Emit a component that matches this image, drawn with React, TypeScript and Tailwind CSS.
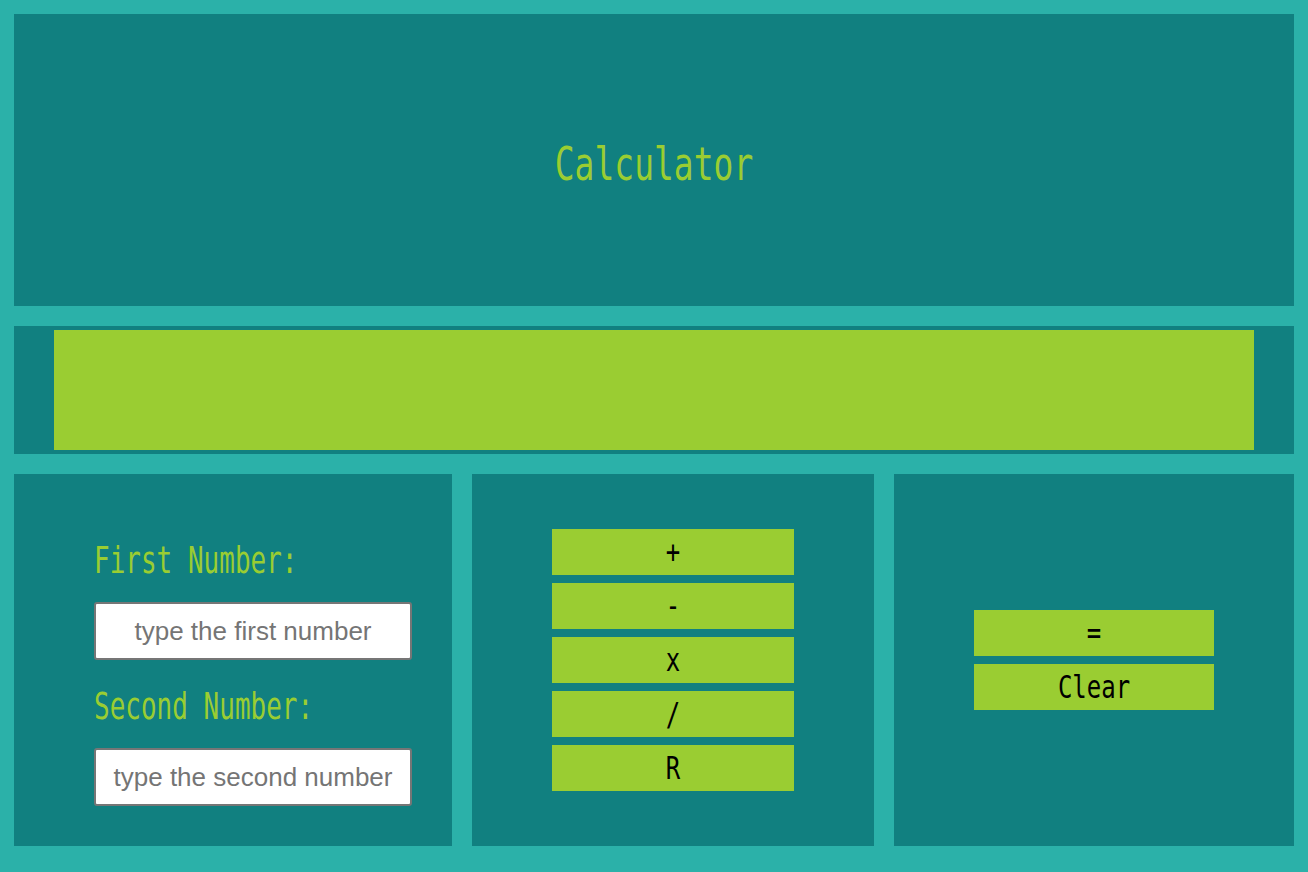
import { useState } from "react";

const mono = "font-['DejaVu_Sans_Mono',monospace]";

const OpButton = ({ label, wide, onClick }: { label: string; wide: string; onClick?: () => void }) => (
  <button
    onClick={onClick}
    className={`${wide} h-[46px] bg-[#9acd32] text-black flex items-center justify-center ${mono}`}
  >
    <span className="text-[24px] leading-[28px] inline-block scale-y-[1.35]">{label}</span>
  </button>
);

const App = () => {
  const [first, setFirst] = useState("");
  const [second, setSecond] = useState("");
  const [result, setResult] = useState("");

  const calc = (op: string) => {
    const a = parseFloat(first);
    const b = parseFloat(second);
    if (isNaN(a) || isNaN(b)) return;
    let r = 0;
    if (op === "+") r = a + b;
    if (op === "-") r = a - b;
    if (op === "x") r = a * b;
    if (op === "/") r = a / b;
    if (op === "R") r = a % b;
    setResult(String(r));
  };

  const clear = () => {
    setFirst("");
    setSecond("");
    setResult("");
  };

  return (
    <div className="min-h-screen bg-[#2bb1a9] px-[14px] pt-[14px] pb-[26px] flex flex-col gap-[20px]">
      <header className="h-[292px] bg-[#118080] flex items-center justify-center pt-[10px]">
        <h1 className={`${mono} text-[33px] leading-[40px] text-[#9acd32] scale-y-[1.4]`}>Calculator</h1>
      </header>

      <section className="h-[128px] bg-[#118080] px-[40px] py-[4px]">
        <div className={`h-full bg-[#9acd32] flex items-center justify-center ${mono} text-[40px] text-black`}>
          {result}
        </div>
      </section>

      <div className="flex gap-[20px] h-[372px]">
        <div className="w-[438px] bg-[#118080] pl-[80px] pt-[71px]">
          <label className={`block ${mono} text-[26px] leading-[30px] text-[#9acd32] scale-y-[1.4] origin-center`}>
            First Number:
          </label>
          <input
            value={first}
            onChange={(e) => setFirst(e.target.value)}
            placeholder="type the first number"
            className="mt-[27px] block w-[318px] h-[58px] bg-white border-2 border-[#767676] rounded-[3px] text-center text-[26px] text-[#333] placeholder:text-[#757575] font-['Liberation_Sans',Arial,sans-serif]"
          />
          <label className={`mt-[31px] block ${mono} text-[26px] leading-[30px] text-[#9acd32] scale-y-[1.4] origin-center`}>
            Second Number:
          </label>
          <input
            value={second}
            onChange={(e) => setSecond(e.target.value)}
            placeholder="type the second number"
            className="mt-[27px] block w-[318px] h-[58px] bg-white border-2 border-[#767676] rounded-[3px] text-center text-[26px] text-[#333] placeholder:text-[#757575] font-['Liberation_Sans',Arial,sans-serif]"
          />
        </div>

        <div className="w-[402px] bg-[#118080] flex flex-col items-center justify-center gap-[8px]">
          {["+", "-", "x", "/", "R"].map((op) => (
            <OpButton key={op} label={op} wide="w-[242px]" onClick={() => calc(op)} />
          ))}
        </div>

        <div className="w-[400px] bg-[#118080] flex flex-col items-center justify-center gap-[8px]">
          <OpButton label="=" wide="w-[240px]" />
          <OpButton label="Clear" wide="w-[240px]" onClick={clear} />
        </div>
      </div>
    </div>
  );
};

export default App;
